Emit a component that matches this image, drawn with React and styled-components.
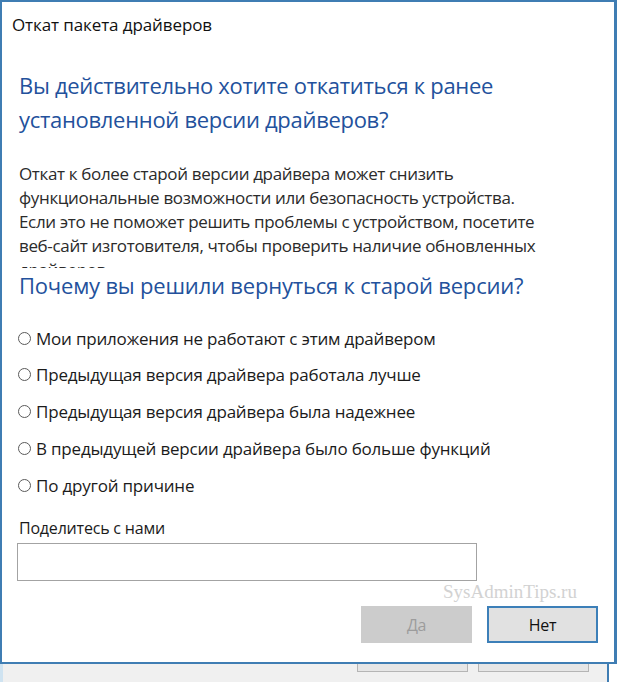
import React from "react";
import styled, { createGlobalStyle } from "styled-components";

const GlobalStyle = createGlobalStyle`
  html, body { margin: 0; padding: 0; }
  body {
    width: 617px;
    height: 682px;
    overflow: hidden;
    background: #f0f0f0;
    font-family: "Open Sans", "Noto Sans", sans-serif;
  }
`;

const Page = styled.div`
  width: 617px;
  height: 682px;
  display: flex;
  flex-direction: column;
  background: #f0f0f0;
`;

const Dialog = styled.div`
  box-sizing: border-box;
  width: 617px;
  height: 664px;
  flex: none;
  background: #fff;
  border: 2px solid #3f7db3;
  border-right-width: 3px;
  display: flex;
  flex-direction: column;
  position: relative;
`;

const TitleBar = styled.div`
  height: 44px;
  padding-left: 10px;
  display: flex;
  align-items: center;
  font-size: 17px;
  color: #111;
  letter-spacing: -0.1px;
`;

const Content = styled.div`
  padding: 0 0 0 17px;
  display: flex;
  flex-direction: column;
`;

const Heading = styled.h1`
  margin: ${(p) => p.$mt ?? 22}px 0 0 0;
  font-weight: 400;
  font-size: 22px;
  line-height: ${(p) => p.$lh || 34}px;
  color: #23519c;
  letter-spacing: ${(p) => p.$ls ?? -0.3}px;
`;

const BodyClip = styled.div`
  margin-top: 26px;
  height: 106px;
  overflow: hidden;
`;

const Body = styled.p`
  margin: 0;
  font-size: 17px;
  line-height: 24px;
  color: #2b2b2b;
  letter-spacing: -0.35px;
`;

const Options = styled.div`
  display: flex;
  flex-direction: column;
  gap: 12.75px;
  margin-top: 26px;
`;

const Option = styled.label`
  display: flex;
  align-items: center;
  gap: 5px;
  height: 24px;
  font-size: 17px;
  color: #1b1b1b;
  letter-spacing: -0.2px;
`;

const Radio = styled.span`
  box-sizing: border-box;
  width: 13px;
  height: 13px;
  border-radius: 50%;
  border: 1px solid #5a5a5a;
  background: #fff;
  flex: none;
  margin-left: -1px;
`;

const ShareLabel = styled.div`
  margin-top: 20px;
  font-size: 16px;
  color: #1b1b1b;
  letter-spacing: -0.2px;
  line-height: 22px;
`;

const Input = styled.div`
  box-sizing: border-box;
  margin-top: 4px;
  margin-left: -2px;
  width: 460px;
  height: 38px;
  border: 1px solid #a3a3a3;
  background: #fff;
`;

const Watermark = styled.div`
  position: absolute;
  left: 441px;
  top: 579px;
  font-family: "Liberation Serif", serif;
  font-size: 19px;
  color: #d2d2d2;
`;

const ButtonRow = styled.div`
  display: flex;
  justify-content: flex-end;
  gap: 15px;
  padding-right: 16px;
  margin-top: 25px;
`;

const Button = styled.div`
  box-sizing: border-box;
  width: 111px;
  height: 37px;
  display: flex;
  align-items: center;
  justify-content: center;
  font-size: 16px;
  letter-spacing: -0.3px;
  background: ${(p) => (p.$disabled ? "#cccccc" : "#e1e1e1")};
  color: ${(p) => (p.$disabled ? "#9c9c9c" : "#111")};
  border: 2px solid ${(p) => (p.$disabled ? "#cccccc" : "#3c7fb8")};
`;

const Behind = styled.div`
  flex: 1;
  display: flex;
  background: #f0f0f0;
`;

const LeftStripe = styled.div`
  width: 3px;
  background: #cfe3f1;
`;

const BehindButtons = styled.div`
  flex: 1;
  display: flex;
  justify-content: flex-end;
  align-items: flex-start;
  gap: 10px;
  padding-right: 18px;
`;

const BehindButton = styled.div`
  box-sizing: border-box;
  width: 111px;
  height: 8px;
  background: #e6e6e6;
  border: 1px solid #b5b5b5;
  border-top: none;
`;

const RightEdge = styled.div`
  width: 2px;
  background: #3f7db3;
`;

const RightWhite = styled.div`
  width: 8px;
  background: #fff;
`;

const reasons = [
  "Мои приложения не работают с этим драйвером",
  "Предыдущая версия драйвера работала лучше",
  "Предыдущая версия драйвера была надежнее",
  "В предыдущей версии драйвера было больше функций",
  "По другой причине",
];

export default function App() {
  return (
    <>
      <GlobalStyle />
      <Page>
        <Dialog>
          <TitleBar>Откат пакета драйверов</TitleBar>
          <Content>
            <Heading $mt={22}>
              Вы действительно хотите откатиться к ранее
              <br />
              установленной версии драйверов?
            </Heading>
            <BodyClip>
              <Body>
                Откат к более старой версии драйвера может снизить
                <br />
                функциональные возможности или безопасность устройства.
                <br />
                Если это не поможет решить проблемы с устройством, посетите
                <br />
                веб-сайт изготовителя, чтобы проверить наличие обновленных
                <br />
                драйверов.
              </Body>
            </BodyClip>
            <Heading $mt={2} $lh={30} $ls={-0.2}>
              Почему вы решили вернуться к старой версии?
            </Heading>
            <Options>
              {reasons.map((t) => (
                <Option key={t}>
                  <Radio />
                  {t}
                </Option>
              ))}
            </Options>
            <ShareLabel>Поделитесь с нами</ShareLabel>
            <Input />
          </Content>
          <Watermark>SysAdminTips.ru</Watermark>
          <ButtonRow>
            <Button $disabled>Да</Button>
            <Button>Нет</Button>
          </ButtonRow>
        </Dialog>
        <Behind>
          <LeftStripe />
          <BehindButtons>
            <BehindButton />
            <BehindButton />
          </BehindButtons>
          <RightEdge />
          <RightWhite />
        </Behind>
      </Page>
    </>
  );
}
